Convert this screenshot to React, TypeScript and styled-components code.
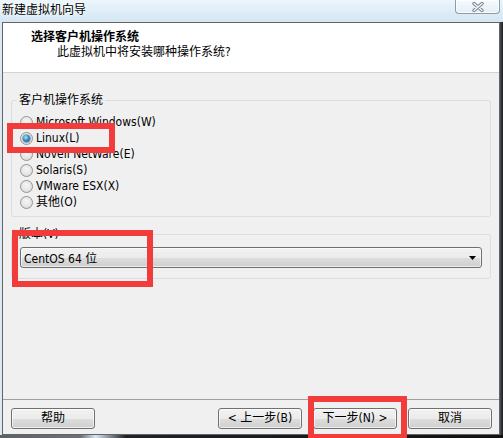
import React from 'react';
import styled, { createGlobalStyle } from 'styled-components';

const GlobalStyle = createGlobalStyle`
  html, body { margin: 0; padding: 0; background: #1c1c1c; }
  body {
    font-family: "DejaVu Sans Condensed", "Liberation Sans", "Noto Sans CJK SC", sans-serif;
    font-size: 12px;
    color: #000;
  }
  * { box-sizing: border-box; }
`;

const Screen = styled.div`
  position: relative;
  width: 503px;
  height: 438px;
  overflow: hidden;
  display: flex;
  flex-direction: column;
`;

const TitleBar = styled.div`
  height: 22px;
  flex: none;
  display: flex;
  justify-content: space-between;
  align-items: flex-start;
  background: linear-gradient(180deg, #edf6fc 0%, #dcecf6 60%, #d5e7f3 100%);
`;

const TitleText = styled.div`
  padding-left: 2px;
  line-height: 21px;
  font-size: 12px;
  text-shadow: 0 0 6px #fff, 0 0 3px #fff;
`;

const CloseButton = styled.div`
  width: 45px;
  height: 14px;
  margin-right: 3px;
  display: flex;
  align-items: center;
  justify-content: center;
  border: 1px solid #8d9cab;
  border-top: none;
  border-radius: 0 0 4px 4px;
  background: linear-gradient(180deg, #f6fafd 0%, #e6eff6 100%);
  box-shadow: inset 0 0 0 1px rgba(255, 255, 255, 0.7);
`;

const WindowRow = styled.div`
  flex: 1;
  display: flex;
`;

const LeftFrame = styled.div`
  width: 2px;
  background: #dbe9f3;
`;

const RightShadow = styled.div`
  width: 3px;
  background: linear-gradient(90deg, #4a4e55 0%, #1b1c1f 100%);
`;

const BottomStrip = styled.div`
  height: 3px;
  flex: none;
  background: linear-gradient(90deg, #5d6269 0%, #6c7077 16%, #d6e6f2 19%, #9aa8b4 21%, #202226 25%, #111 100%);
`;

const Client = styled.div`
  flex: 1;
  display: flex;
  flex-direction: column;
  border: 1px solid #646464;
  background: #f0f0f0;
`;

const Header = styled.div`
  height: 50px;
  flex: none;
  background: #fff;
  border-bottom: 1px solid #d3d3d3;
  padding-top: 7px;
`;

const HeaderTitle = styled.div`
  padding-left: 28px;
  line-height: 15px;
  font-weight: bold;
`;

const HeaderSub = styled.div`
  padding-left: 54px;
  line-height: 15px;
`;

const Body = styled.div`
  flex: 1;
  padding: 20px 8px 0 8px;
  display: flex;
  flex-direction: column;
  gap: 10px;
`;

const Group = styled.fieldset<{ $padTop: number; $padBottom: number }>`
  margin: 0;
  min-width: 0;
  border: 1px solid #d5dfe5;
  border-radius: 3px;
  padding: ${(p) => p.$padTop}px 8px ${(p) => p.$padBottom}px 8px;
`;

const Legend = styled.legend`
  padding: 0 2px;
  margin-left: -3px;
  line-height: 15px;
`;

const RadioRow = styled.label`
  height: 16px;
  display: flex;
  align-items: center;
  gap: 3px;
  line-height: 16px;
`;

const RadioMark = styled.span<{ $checked?: boolean }>`
  position: relative;
  width: 13px;
  height: 13px;
  flex: none;
  border-radius: 50%;
  border: 1px solid #939393;
  background: radial-gradient(circle at 50% 40%, #f7f7f7 0%, #e6e6e6 55%, #d0d0d0 100%);
  &::after {
    content: '';
    display: ${(p) => (p.$checked ? 'block' : 'none')};
    position: absolute;
    left: 2px;
    top: 2px;
    width: 7px;
    height: 7px;
    border-radius: 50%;
    background: radial-gradient(circle at 40% 35%, #b9e2fa 0%, #3d8fc9 45%, #174f7c 100%);
    box-shadow: 0 0 0 0.5px #2b5f86;
  }
`;

const Combo = styled.div`
  height: 21px;
  display: flex;
  align-items: center;
  justify-content: space-between;
  padding: 0 5px 0 3px;
  border: 1px solid #707070;
  border-radius: 3px;
  background: linear-gradient(180deg, #f2f2f2 0%, #ebebeb 50%, #dddddd 51%, #cfcfcf 100%);
  box-shadow: inset 0 0 0 1px rgba(255, 255, 255, 0.6);
`;

const Footer = styled.div`
  flex: none;
  display: flex;
  align-items: flex-start;
  gap: 11px;
  padding: 8px 7px 5px 8px;
  border-top: 1px solid #a0a0a0;
`;

const Button = styled.button<{ $pushRight?: boolean }>`
  width: 84px;
  height: 21px;
  padding: 0;
  margin-left: ${(p) => (p.$pushRight ? 'auto' : '0')};
  font: inherit;
  color: #000;
  border: 1px solid #707070;
  border-radius: 3px;
  background: linear-gradient(180deg, #f2f2f2 0%, #ebebeb 50%, #dddddd 51%, #cfcfcf 100%);
  box-shadow: inset 0 0 0 1px rgba(255, 255, 255, 0.65);
  line-height: 19px;
`;

const Highlight = styled.div<{ $x: number; $y: number; $w: number; $h: number }>`
  position: absolute;
  left: ${(p) => p.$x}px;
  top: ${(p) => p.$y}px;
  width: ${(p) => p.$w}px;
  height: ${(p) => p.$h}px;
  border: 6px solid #f23c3c;
  pointer-events: none;
`;

const CloseIcon = () => (
  <svg width="12" height="10" viewBox="0 0 12 10">
    <path d="M2 1.5 L10 8.5 M10 1.5 L2 8.5" stroke="#7d8590" strokeWidth="3.4" strokeLinecap="round" fill="none" />
    <path d="M2 1.5 L10 8.5 M10 1.5 L2 8.5" stroke="#f4f6f8" strokeWidth="1.4" strokeLinecap="round" fill="none" />
  </svg>
);

const ArrowDown = () => (
  <svg width="7" height="4" viewBox="0 0 7 4">
    <path d="M0 0 H7 L3.5 4 Z" fill="#000" />
  </svg>
);

const osList = [
  { label: 'Microsoft Windows(W)', checked: false },
  { label: 'Linux(L)', checked: true },
  { label: 'Novell NetWare(E)', checked: false },
  { label: 'Solaris(S)', checked: false },
  { label: 'VMware ESX(X)', checked: false },
  { label: '其他(O)', checked: false },
];

export default function App() {
  return (
    <>
      <GlobalStyle />
      <Screen>
        <TitleBar>
          <TitleText>新建虚拟机向导</TitleText>
          <CloseButton>
            <CloseIcon />
          </CloseButton>
        </TitleBar>
        <WindowRow>
          <LeftFrame />
          <Client>
            <Header>
              <HeaderTitle>选择客户机操作系统</HeaderTitle>
              <HeaderSub>此虚拟机中将安装哪种操作系统?</HeaderSub>
            </Header>
            <Body>
              <Group $padTop={6} $padBottom={6}>
                <Legend>客户机操作系统</Legend>
                {osList.map((os) => (
                  <RadioRow key={os.label}>
                    <RadioMark $checked={os.checked} />
                    <span>{os.label}</span>
                  </RadioRow>
                ))}
              </Group>
              <Group $padTop={5} $padBottom={10}>
                <Legend>版本(V)</Legend>
                <Combo>
                  <span>CentOS 64 位</span>
                  <ArrowDown />
                </Combo>
              </Group>
            </Body>
            <Footer>
              <Button>帮助</Button>
              <Button $pushRight>&lt; 上一步(B)</Button>
              <Button>下一步(N) &gt;</Button>
              <Button>取消</Button>
            </Footer>
          </Client>
          <RightShadow />
        </WindowRow>
        <BottomStrip />
        <Highlight $x={7} $y={123} $w={108} $h={30} />
        <Highlight $x={12} $y={230} $w={141} $h={57} />
        <Highlight $x={308} $y={396} $w={99} $h={44} />
      </Screen>
    </>
  );
}
